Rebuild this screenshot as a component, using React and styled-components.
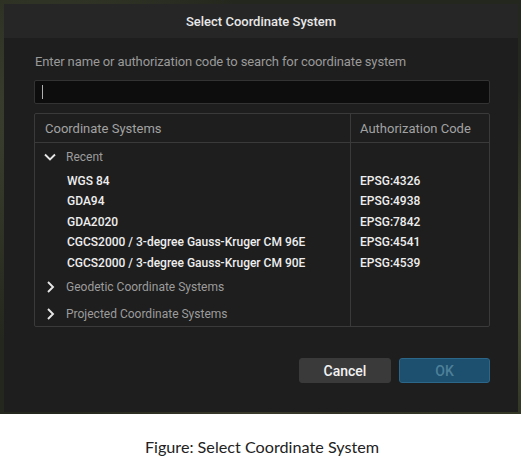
import React from "react";
import styled, { createGlobalStyle } from "styled-components";

const Global = createGlobalStyle`
  html, body { margin: 0; padding: 0; background: #ffffff; }
  body { width: 525px; height: 462px; overflow: hidden; }
`;

const Page = styled.div`
  width: 525px;
  display: flex;
  flex-direction: column;
`;

const MapBackdrop = styled.div`
  width: 521px;
  height: 414px;
  padding: 4px 3px 2px 4px;
  box-sizing: border-box;
  background:
    radial-gradient(circle at 10% 30%, #3d4230 0, transparent 40%),
    radial-gradient(circle at 95% 70%, #4a5235 0, transparent 35%),
    radial-gradient(circle at 50% 100%, #3b3b2c 0, transparent 40%),
    #24271d;
`;

const Dialog = styled.div`
  width: 514px;
  height: 408px;
  background: #1e1e1e;
  display: flex;
  flex-direction: column;
  font-family: Roboto, "Liberation Sans", sans-serif;
`;

const TitleBar = styled.div`
  height: 34px;
  background: #262626;
  display: flex;
  align-items: center;
  justify-content: center;
  color: #e8e8e8;
  font-size: 13px;
  font-weight: 500;
`;

const Body = styled.div`
  flex: 1;
  display: flex;
  flex-direction: column;
  padding: 15px 28px 0 30px;
`;

const Label = styled.div`
  color: #9a9a9a;
  font-size: 13px;
  line-height: 18px;
  letter-spacing: -0.12px;
  margin-left: 1px;
`;

const SearchBox = styled.div`
  margin-top: 9px;
  height: 24px;
  box-sizing: border-box;
  background: #0d0d0d;
  border: 1px solid #333333;
  border-radius: 2px;
  display: flex;
  align-items: center;
  padding-left: 7px;
`;

const Caret = styled.span`
  width: 1px;
  height: 14px;
  background: #b0b0b0;
`;

const Table = styled.div`
  margin-top: 9px;
  height: 214px;
  box-sizing: border-box;
  border: 1px solid #3a3a3a;
  border-radius: 2px;
  display: grid;
  grid-template-columns: 316px 1fr;
  grid-template-rows: 29px 1fr;
`;

const HeaderCell = styled.div`
  display: flex;
  align-items: center;
  padding-left: ${(p) => p.$pad}px;
  color: #a2a2a2;
  font-size: 13px;
  border-bottom: 1px solid #3a3a3a;
  border-right: ${(p) => (p.$divider ? "1px solid #3a3a3a" : "none")};
`;

const Column = styled.div`
  display: flex;
  flex-direction: column;
  padding-top: 0.5px;
  border-right: ${(p) => (p.$divider ? "1px solid #3a3a3a" : "none")};
`;

const GroupRow = styled.div`
  height: 27px;
  flex-shrink: 0;
  display: flex;
  align-items: center;
  padding-left: 8px;
  gap: 9px;
  color: #9c9c9c;
  font-size: 12px;
`;

const ItemRow = styled.div`
  height: 20.5px;
  flex-shrink: 0;
  display: flex;
  align-items: center;
  padding-left: ${(p) => p.$pad}px;
  color: #eeeeee;
  font-size: 12px;
  font-weight: 500;
`;

const Spacer = styled.div`
  height: ${(p) => p.$h}px;
  flex-shrink: 0;
`;

const Footer = styled.div`
  margin-top: 31px;
  display: flex;
  justify-content: flex-end;
  gap: 8px;
`;

const Button = styled.button`
  width: ${(p) => p.$w}px;
  height: 25px;
  border-radius: 3px;
  font-family: Roboto, "Liberation Sans", sans-serif;
  font-size: 14px;
  font-weight: 500;
  border: 1px solid ${(p) => (p.$primary ? "#2c6689" : "#3a3a3a")};
  background: ${(p) => (p.$primary ? "#1d4f6e" : "#3a3a3a")};
  color: ${(p) => (p.$primary ? "#4d8099" : "#f2f2f2")};
  padding: 0;
`;

const Caption = styled.div`
  margin-top: 23px;
  text-align: center;
  font-family: Lato, "Noto Sans", sans-serif;
  font-size: 16.2px;
  color: #222;
  padding-right: 1px;
`;

const Chevron = ({ open }) => (
  <svg width="14" height="14" viewBox="0 0 14 14" fill="none">
    {open ? (
      <path d="M2 4.5 L7 9.5 L12 4.5" stroke="#e6e6e6" strokeWidth="1.9" />
    ) : (
      <path d="M5 2 L10 7 L5 12" stroke="#e6e6e6" strokeWidth="1.9" />
    )}
  </svg>
);

const items = [
  ["WGS 84", "EPSG:4326"],
  ["GDA94", "EPSG:4938"],
  ["GDA2020", "EPSG:7842"],
  ["CGCS2000 / 3-degree Gauss-Kruger CM 96E", "EPSG:4541"],
  ["CGCS2000 / 3-degree Gauss-Kruger CM 90E", "EPSG:4539"],
];

export default function App() {
  return (
    <Page>
      <Global />
      <MapBackdrop>
        <Dialog>
          <TitleBar>Select Coordinate System</TitleBar>
          <Body>
            <Label>Enter name or authorization code to search for coordinate system</Label>
            <SearchBox>
              <Caret />
            </SearchBox>
            <Table>
              <HeaderCell $pad={10} $divider>Coordinate Systems</HeaderCell>
              <HeaderCell $pad={9}>Authorization Code</HeaderCell>
              <Column $divider>
                <GroupRow>
                  <Chevron open />
                  Recent
                </GroupRow>
                {items.map(([name]) => (
                  <ItemRow key={name} $pad={32}>{name}</ItemRow>
                ))}
                <GroupRow>
                  <Chevron />
                  Geodetic Coordinate Systems
                </GroupRow>
                <GroupRow>
                  <Chevron />
                  Projected Coordinate Systems
                </GroupRow>
              </Column>
              <Column>
                <Spacer $h={27} />
                {items.map(([name, code]) => (
                  <ItemRow key={name} $pad={9}>{code}</ItemRow>
                ))}
              </Column>
            </Table>
            <Footer>
              <Button $w={92}>Cancel</Button>
              <Button $w={91} $primary>OK</Button>
            </Footer>
          </Body>
        </Dialog>
      </MapBackdrop>
      <Caption>Figure: Select Coordinate System</Caption>
    </Page>
  );
}
